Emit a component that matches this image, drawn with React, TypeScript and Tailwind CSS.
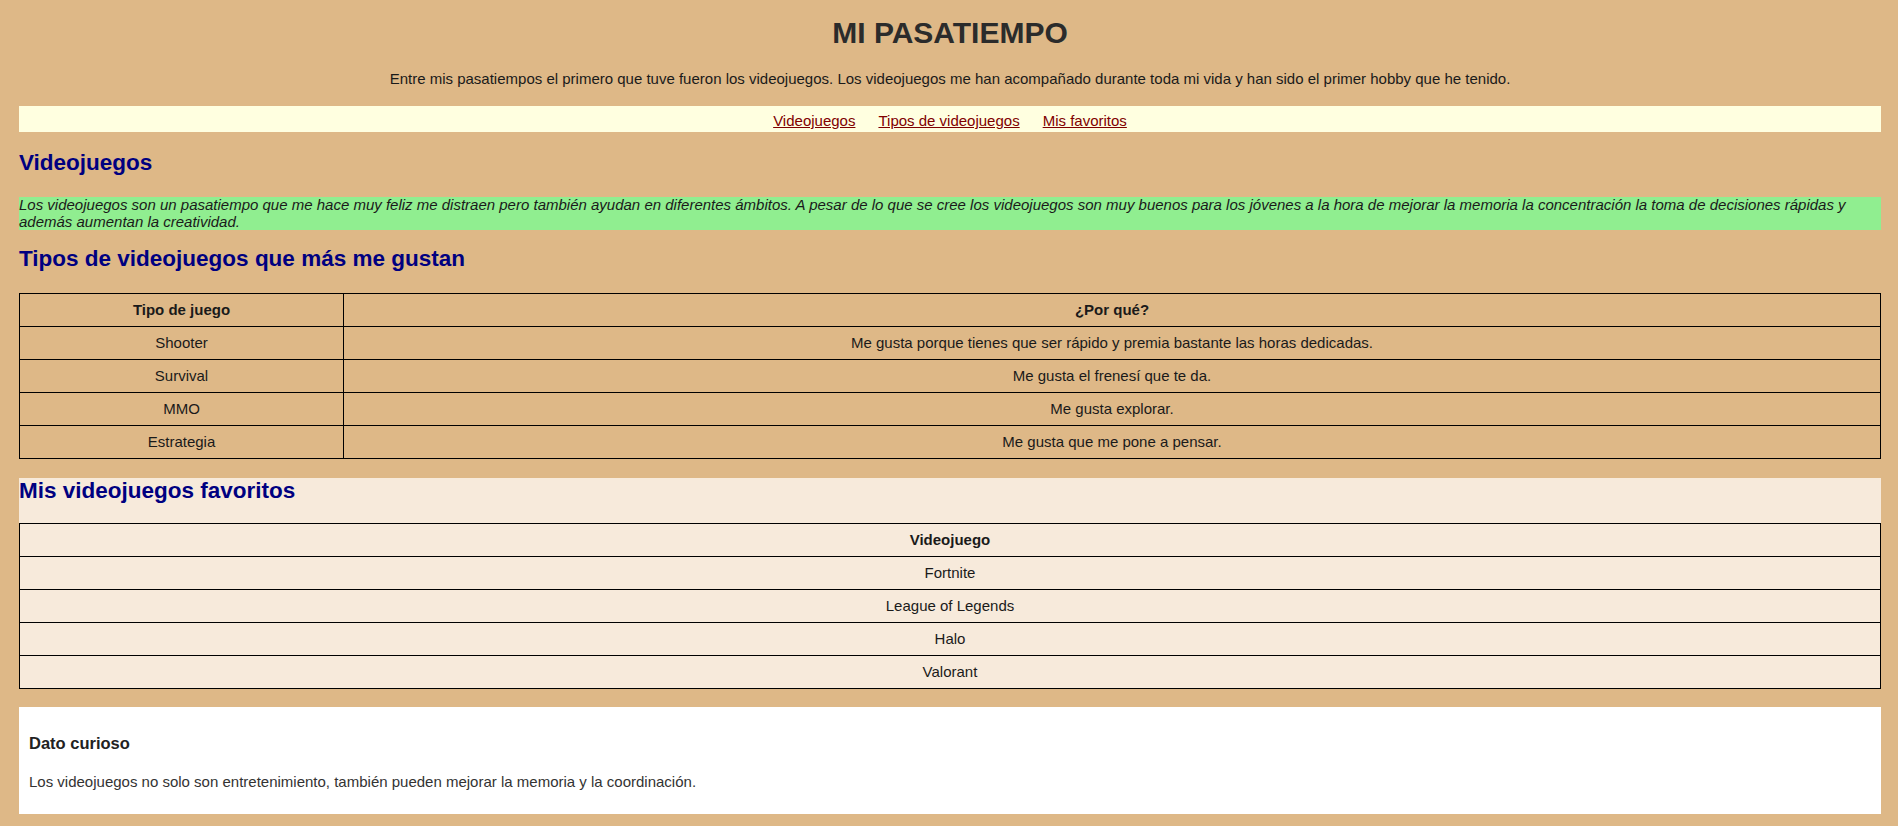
import React from 'react';

const tipos = [
  { juego: 'Shooter', porque: 'Me gusta porque tienes que ser rápido y premia bastante las horas dedicadas.' },
  { juego: 'Survival', porque: 'Me gusta el frenesí que te da.' },
  { juego: 'MMO', porque: 'Me gusta explorar.' },
  { juego: 'Estrategia', porque: 'Me gusta que me pone a pensar.' },
];

const favoritos = ['Fortnite', 'League of Legends', 'Halo', 'Valorant'];

const cell = 'border border-black text-center py-[7px] leading-[18px]';

const App: React.FC = () => {
  return (
    <div className="min-h-screen bg-[#deb887] pl-[19px] pr-[17px] pt-[15px] pb-[12px] font-['Liberation_Sans',Arial,sans-serif] text-[15px] text-[#1a1a1a]">
      <h1 className="text-center text-[30px] leading-[35px] font-bold text-[#2b2b2b]">MI PASATIEMPO</h1>
      <p className="mt-[20px] text-center leading-[17px]">
        Entre mis pasatiempos el primero que tuve fueron los videojuegos. Los videojuegos me han acompañado durante toda mi vida y han sido el primer hobby que he tenido.
      </p>

      <nav className="mt-[19px] h-[26px] pt-[6px] leading-[17px] bg-[#ffffe0] flex justify-center gap-[23px]">
        <a href="#videojuegos" className="text-[#800000] underline">Videojuegos</a>
        <a href="#tipos" className="text-[#800000] underline">Tipos de videojuegos</a>
        <a href="#favoritos" className="text-[#800000] underline">Mis favoritos</a>
      </nav>

      <h2 id="videojuegos" className="mt-[18px] text-[22.5px] leading-[26px] font-bold text-[#000080]">Videojuegos</h2>
      <p className="mt-[21px] italic leading-[16.5px] bg-[#90ee90]">
        Los videojuegos son un pasatiempo que me hace muy feliz me distraen pero también ayudan en diferentes ámbitos. A pesar de lo que se cree los videojuegos son muy buenos para los jóvenes a la hora de mejorar la memoria la concentración la toma de decisiones rápidas y además aumentan la creatividad.
      </p>

      <h2 id="tipos" className="mt-[16px] text-[22.5px] leading-[26px] font-bold text-[#000080]">Tipos de videojuegos que más me gustan</h2>
      <table className="mt-[21px] w-full border-collapse">
        <thead>
          <tr>
            <th className={`${cell} w-[324px] font-bold`}>Tipo de juego</th>
            <th className={`${cell} font-bold`}>¿Por qué?</th>
          </tr>
        </thead>
        <tbody>
          {tipos.map((t) => (
            <tr key={t.juego}>
              <td className={cell}>{t.juego}</td>
              <td className={cell}>{t.porque}</td>
            </tr>
          ))}
        </tbody>
      </table>

      <section id="favoritos" className="mt-[19px] bg-[#f7eadb]">
        <h2 className="text-[22.5px] leading-[26px] font-bold text-[#000080]">Mis videojuegos favoritos</h2>
        <table className="mt-[19px] w-full border-collapse">
          <thead>
            <tr>
              <th className={`${cell} font-bold`}>Videojuego</th>
            </tr>
          </thead>
          <tbody>
            {favoritos.map((f) => (
              <tr key={f}>
                <td className={cell}>{f}</td>
              </tr>
            ))}
          </tbody>
        </table>
      </section>

      <div className="mt-[18px] bg-white px-[10px] pt-[10px] pb-[10px]">
        <h3 className="mt-[17px] text-[16.5px] leading-[19px] font-bold text-[#222]">Dato curioso</h3>
        <p className="mt-[20px] mb-[14px] leading-[17px] text-[#333]">
          Los videojuegos no solo son entretenimiento, también pueden mejorar la memoria y la coordinación.
        </p>
      </div>
    </div>
  );
};

export default App;
